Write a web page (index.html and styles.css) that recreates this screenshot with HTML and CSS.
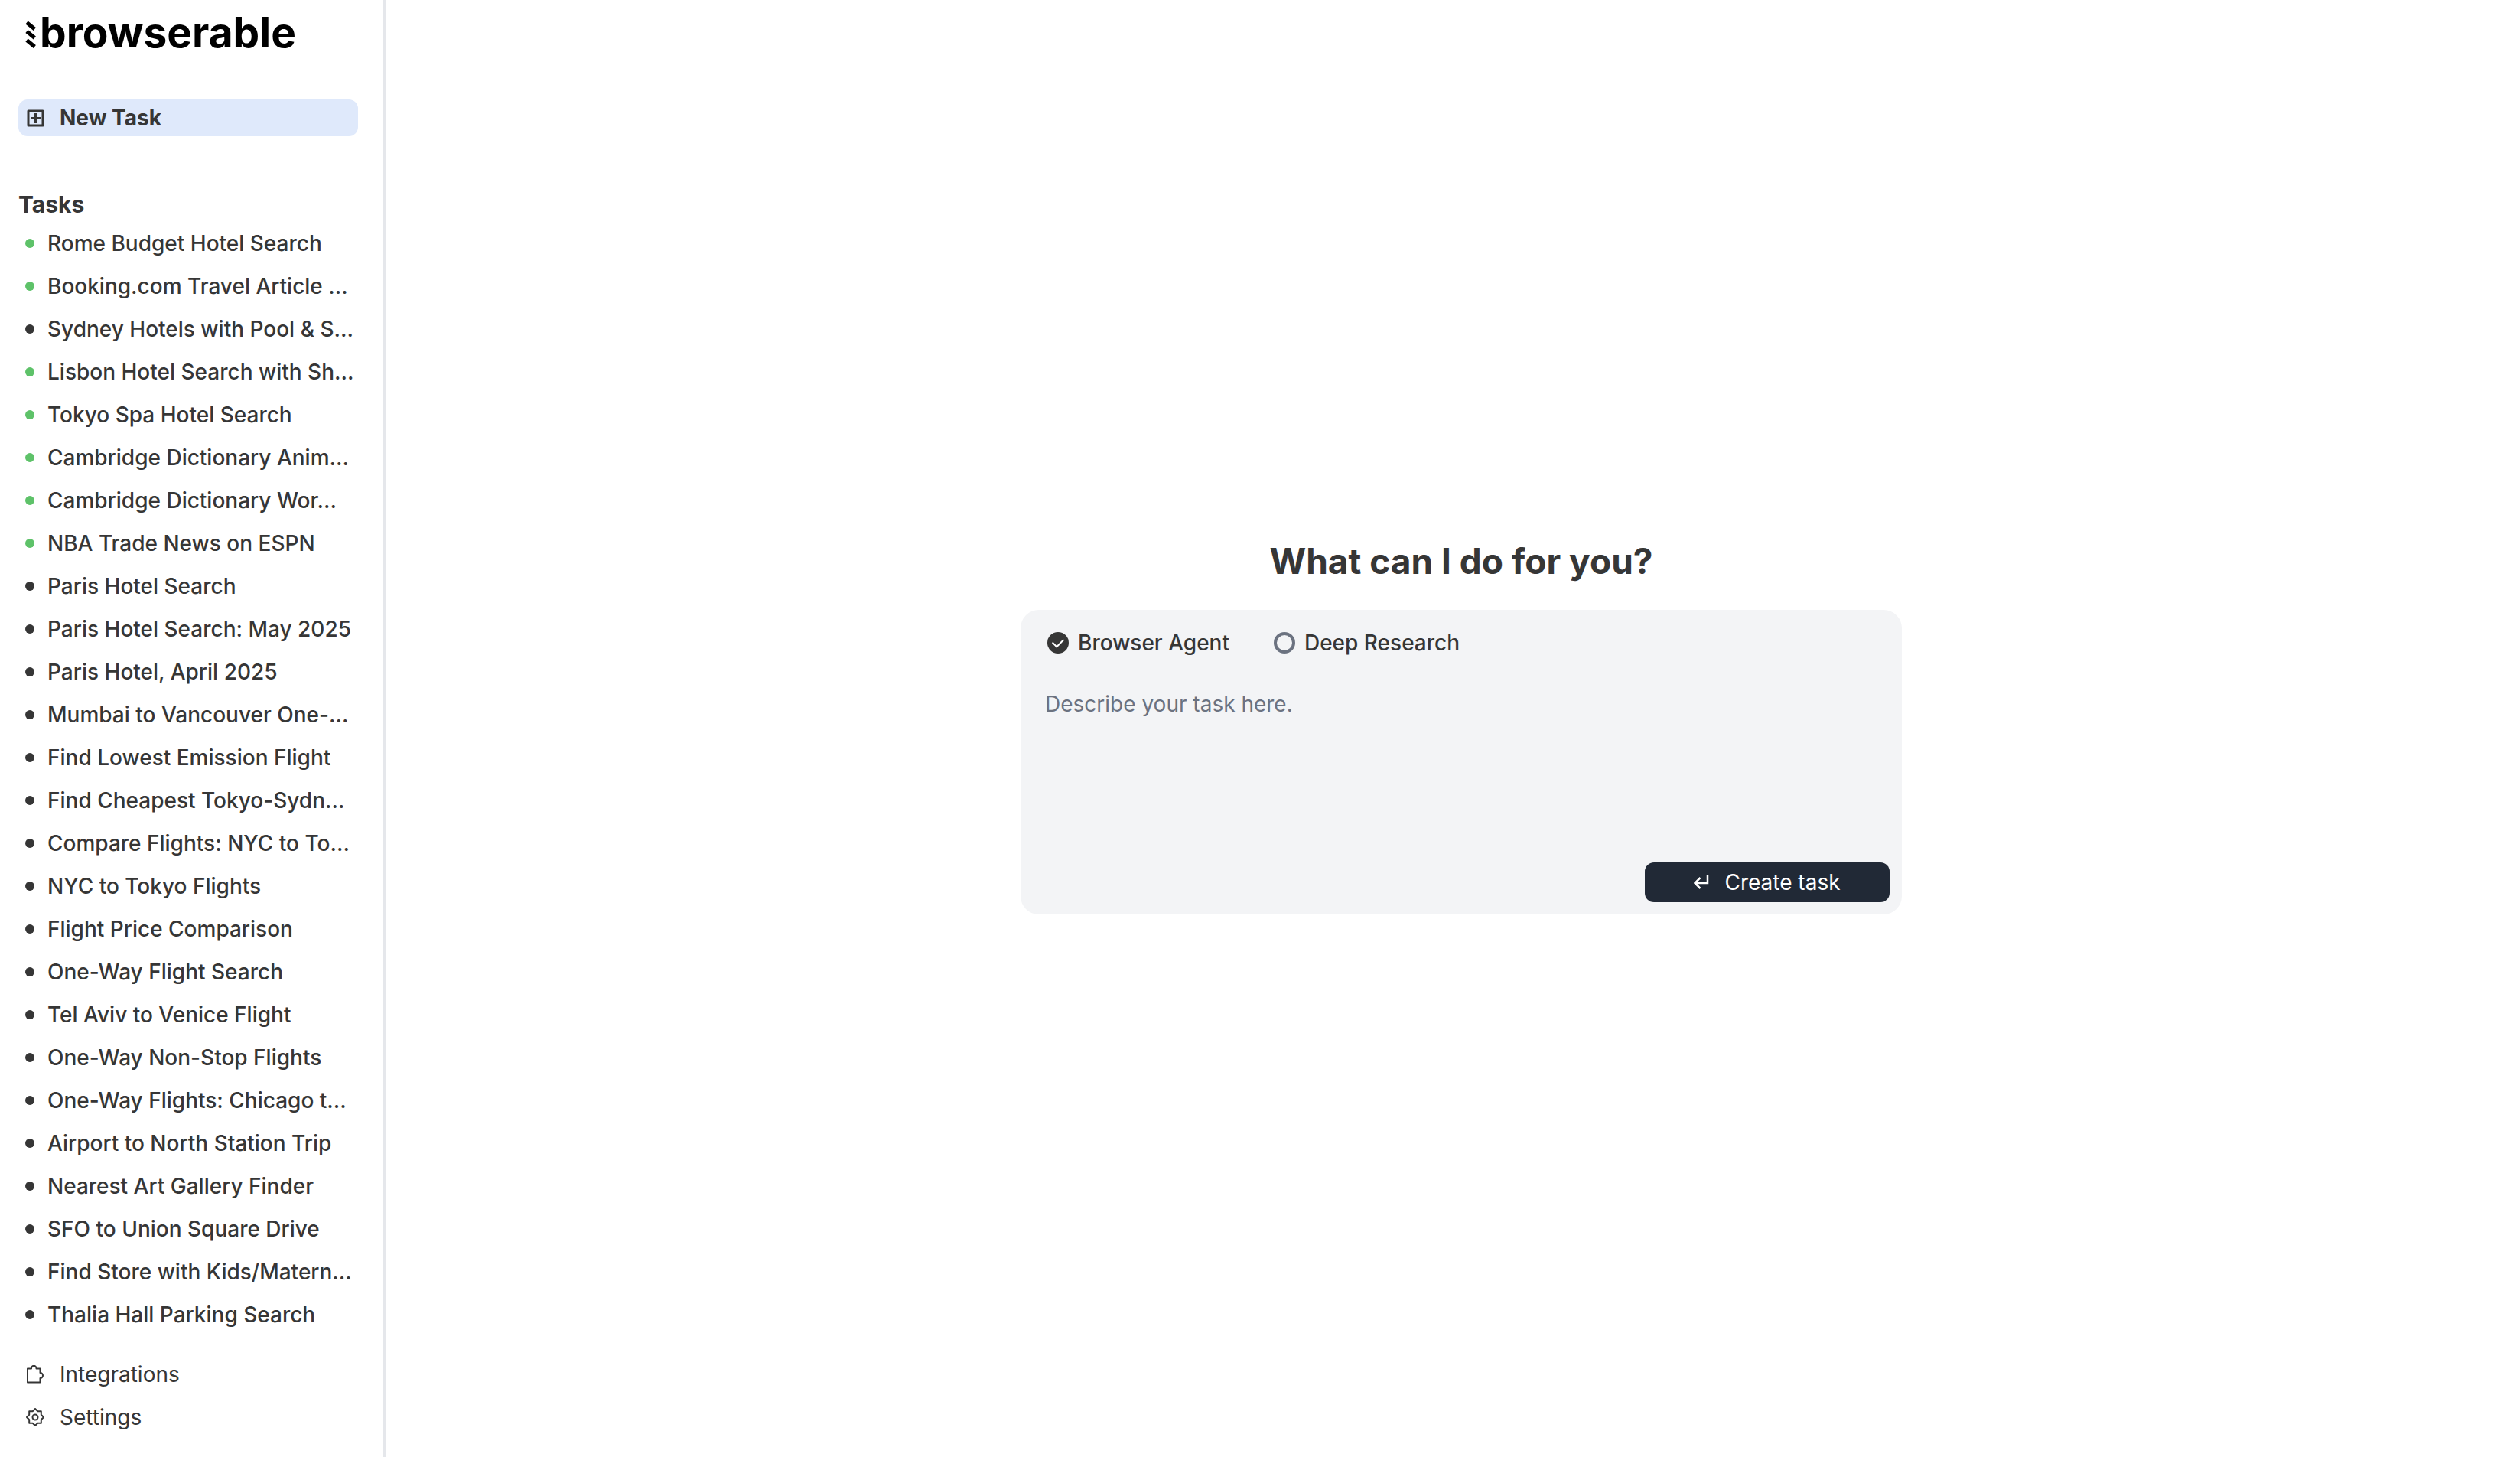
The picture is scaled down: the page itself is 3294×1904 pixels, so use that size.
FILE: index.html
```html
<!DOCTYPE html>
<html lang="en">
<head>
<meta charset="utf-8">
<title>browserable</title>
<link rel="stylesheet" href="styles.css">
</head>
<body>
<div class="app">
  <aside class="sidebar">
    <a class="brand" href="#">
      <svg class="brand-mark" viewBox="0 0 14 44" aria-hidden="true"><path d="M2 9.500 12.300 18M2 21 12.300 29.500M2 32.500 12.300 41" fill="none" stroke="currentColor" stroke-width="5"/></svg>
      <span>browserable</span>
    </a>
    <a class="nav-link new-task" href="#">
      <svg class="icon" viewBox="0 0 24 24" aria-hidden="true"><path d="M3 3H22V22H3ZM12.500 6V19M6 12.500H19" fill="none" stroke="currentColor" stroke-width="3" stroke-linejoin="round"/></svg>
      <span>New Task</span>
    </a>
    <h2 class="section-title">Tasks</h2>
    <ul class="task-list">
      <li><a class="task done" href="#">Rome Budget Hotel Search</a></li>
      <li><a class="task done" href="#">Booking.com Travel Article …</a></li>
      <li><a class="task" href="#">Sydney Hotels with Pool &amp; S…</a></li>
      <li><a class="task done" href="#">Lisbon Hotel Search with Sh…</a></li>
      <li><a class="task done" href="#">Tokyo Spa Hotel Search</a></li>
      <li><a class="task done" href="#">Cambridge Dictionary Anim…</a></li>
      <li><a class="task done" href="#">Cambridge Dictionary Wor…</a></li>
      <li><a class="task done" href="#">NBA Trade News on ESPN</a></li>
      <li><a class="task" href="#">Paris Hotel Search</a></li>
      <li><a class="task" href="#">Paris Hotel Search: May 2025</a></li>
      <li><a class="task" href="#">Paris Hotel, April 2025</a></li>
      <li><a class="task" href="#">Mumbai to Vancouver One-…</a></li>
      <li><a class="task" href="#">Find Lowest Emission Flight</a></li>
      <li><a class="task" href="#">Find Cheapest Tokyo-Sydn…</a></li>
      <li><a class="task" href="#">Compare Flights: NYC to To…</a></li>
      <li><a class="task" href="#">NYC to Tokyo Flights</a></li>
      <li><a class="task" href="#">Flight Price Comparison</a></li>
      <li><a class="task" href="#">One-Way Flight Search</a></li>
      <li><a class="task" href="#">Tel Aviv to Venice Flight</a></li>
      <li><a class="task" href="#">One-Way Non-Stop Flights</a></li>
      <li><a class="task" href="#">One-Way Flights: Chicago t…</a></li>
      <li><a class="task" href="#">Airport to North Station Trip</a></li>
      <li><a class="task" href="#">Nearest Art Gallery Finder</a></li>
      <li><a class="task" href="#">SFO to Union Square Drive</a></li>
      <li><a class="task" href="#">Find Store with Kids/Matern…</a></li>
      <li><a class="task" href="#">Thalia Hall Parking Search</a></li>
    </ul>
    <nav class="footer-nav">
      <a class="nav-link" href="#">
        <svg class="icon" viewBox="0 0 24 24" aria-hidden="true"><path d="M2 4.500H7V4A3 3 0 0 1 13.500 4V4.500H18.500V10A3.500 3.500 0 0 1 18.500 17V22.500H2Z" fill="none" stroke="currentColor" stroke-width="2" stroke-linejoin="round"/></svg>
        <span>Integrations</span>
      </a>
      <a class="nav-link" href="#">
        <svg class="icon" viewBox="0 0 24 24" aria-hidden="true"><path d="M12 1 15.300 4.200H19.800V8.700L23 12 19.800 15.300V19.800H15.300L12 23 8.700 19.800H4.200V15.300L1 12 4.200 8.700V4.200H8.700Z" fill="none" stroke="currentColor" stroke-width="2" stroke-linejoin="round"/><circle cx="12" cy="12" r="3.500" fill="none" stroke="currentColor" stroke-width="2"/></svg>
        <span>Settings</span>
      </a>
    </nav>
  </aside>
  <main class="main">
    <h1 class="title">What can I do for you?</h1>
    <form class="composer">
      <div class="modes">
        <label class="mode"><input class="mode-input" type="radio" name="mode" checked><span>Browser Agent</span></label>
        <label class="mode"><input class="mode-input" type="radio" name="mode"><span>Deep Research</span></label>
      </div>
      <textarea class="prompt" aria-label="Task description" placeholder="Describe your task here."></textarea>
      <button class="submit" type="button">
        <svg class="submit-icon" viewBox="0 0 20 18" aria-hidden="true"><path d="M18 0V10H2M8.500 3 1.500 10 8.500 17" fill="none" stroke="currentColor" stroke-width="2.500"/></svg>
        <span>Create task</span>
      </button>
    </form>
  </main>
</div>
</body>
</html>
```
FILE: styles.css
```css
* { box-sizing: border-box; }
body {
  margin: 0;
  background: #fff;
  color: #363636;
  font-family: Inter, "Liberation Sans", sans-serif;
  font-size: 28px;
  line-height: 40px;
}
a { color: inherit; text-decoration: none; }
.app { display: flex; min-height: 100vh; }
.sidebar {
  display: flex;
  flex-direction: column;
  flex: 0 0 504px;
  padding: 0 32px 28px 24px;
  border-right: 4px solid #e5e7eb;
}
.brand {
  display: flex;
  align-items: center;
  gap: 5px;
  height: 84px;
  padding-left: 9px;
  margin-bottom: 46px;
  color: #000;
  font-size: 55px;
  font-weight: 700;
}
.brand-mark { width: 14px; height: 44px; }
.nav-link {
  display: flex;
  align-items: center;
  gap: 20px;
  height: 48px;
  padding: 0 10px;
  border-radius: 12px;
}
.icon { width: 24px; height: 24px; }
.new-task { background: #dfe9fb; font-weight: 700; }
.section-title {
  margin: 69px 0 3px;
  font-size: 30px;
  line-height: 40px;
  font-weight: 700;
}
.task-list {
  display: grid;
  grid-auto-rows: 56px;
  margin: 0;
  padding: 0;
  list-style: none;
}
.task {
  display: flex;
  align-items: center;
  gap: 17px;
  height: 56px;
  padding-left: 9px;
  font-weight: 500;
  white-space: nowrap;
}
.task::before {
  content: "";
  width: 12px;
  height: 12px;
  border-radius: 50%;
  background: #363636;
}
.done::before { background: #5ec269; }
.footer-nav {
  display: grid;
  gap: 8px;
  margin-top: auto;
}
.main {
  display: flex;
  flex: 1;
  flex-direction: column;
  align-items: center;
  justify-content: center;
  gap: 40px;
  padding-left: 22px;
}
.title {
  margin: 0;
  font-size: 46px;
  line-height: 48px;
  font-weight: 700;
}
.composer {
  display: flex;
  flex-direction: column;
  width: 100%;
  max-width: 1152px;
  min-height: 398px;
  padding: 23px 16px 16px;
  border-radius: 24px;
  background: #f3f4f6;
}
.modes { display: flex; gap: 58px; padding: 0 19px; }
.mode { display: flex; align-items: center; gap: 12px; font-weight: 500; }
.mode-input {
  appearance: none;
  width: 28px;
  height: 28px;
  margin: 0;
  border: 4px solid #6b7280;
  border-radius: 50%;
}
.mode-input:checked { display: grid; place-items: center; border: 0; background: #363636; }
.mode-input:checked::before {
  content: "";
  width: 12px;
  height: 7px;
  border: solid #fff;
  border-width: 0 0 2px 2px;
  transform: translateY(-2px) rotate(-45deg);
}
.prompt {
  flex: 1;
  padding: 40px 16px 0;
  border: 0;
  outline: 0;
  resize: none;
  background: transparent;
  color: inherit;
  font: inherit;
}
.prompt::placeholder { color: #6b7280; opacity: 1; }
.submit {
  display: flex;
  align-items: center;
  justify-content: center;
  gap: 20px;
  align-self: flex-end;
  width: 320px;
  height: 52px;
  border: 0;
  border-radius: 12px;
  background: #212936;
  color: #fff;
  font: inherit;
}
.submit-icon { width: 20px; height: 18px; }
```
